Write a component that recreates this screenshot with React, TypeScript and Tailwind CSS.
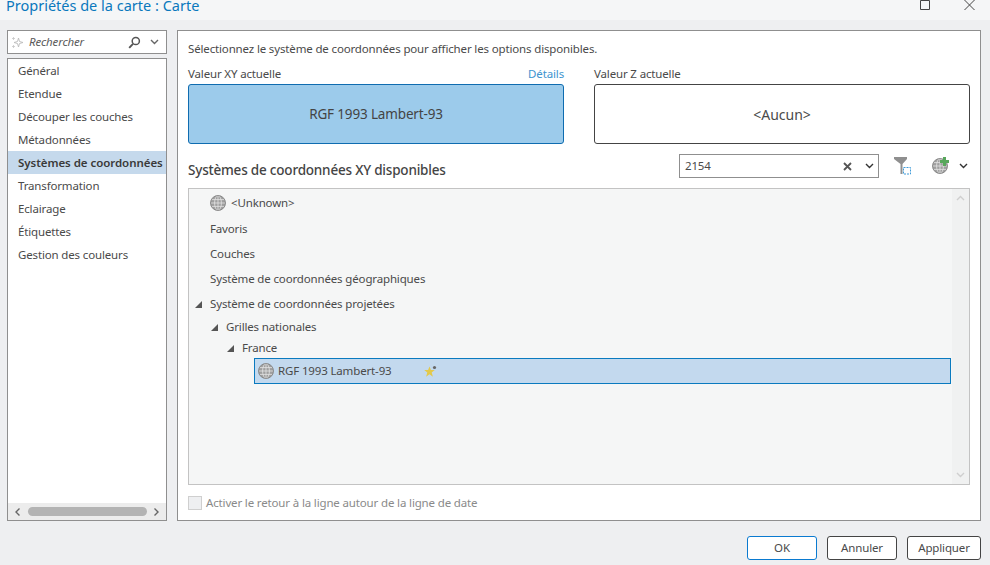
const navItems = [
  'Général',
  'Etendue',
  'Découper les couches',
  'Métadonnées',
  'Systèmes de coordonnées',
  'Transformation',
  'Eclairage',
  'Étiquettes',
  'Gestion des couleurs',
];

function Globe({ size = 16 }: { size?: number }) {
  return (
    <svg width={size} height={size} viewBox="0 0 16 16" className="shrink-0" fill="none">
      <circle cx="8" cy="8" r="7.5" fill="#9f9f9f" />
      <g stroke="#e4e4e4" strokeWidth="0.8">
        <ellipse cx="8" cy="8" rx="3.4" ry="7.4" />
        <path d="M8 .5v15M1.2 4.6h13.6M.5 8h15M1.2 11.4h13.6" />
      </g>
      <circle cx="8" cy="8" r="7.5" stroke="#858585" strokeWidth="0.9" />
    </svg>
  );
}

function Chevron({ className = '' }: { className?: string }) {
  return (
    <svg width="9" height="6" viewBox="0 0 9 6" fill="none" className={className}>
      <path d="M1 1l3.5 3.5L8 1" stroke="currentColor" strokeWidth="1.4" />
    </svg>
  );
}

function Arrow() {
  return (
    <svg width="7" height="7" viewBox="0 0 7 7" className="shrink-0">
      <path d="M7 0v7H0z" fill="#555" />
    </svg>
  );
}

export default function App() {
  return (
    <div className="w-[990px] h-[565px] flex flex-col overflow-hidden bg-[#eeeff1] text-[11.5px] tracking-[-0.15px] text-[#4a4a4a] font-['Noto_Sans',sans-serif]">
      {/* Title bar */}
      <div className="h-5 shrink-0 bg-[#f5f6f7] flex items-start justify-between pl-[6px] overflow-hidden">
        <span className="text-[14.5px] leading-[11px] tracking-normal text-[#0a78bd]">Propriétés de la carte : Carte</span>
        <div className="flex self-start">
          <svg width="10" height="10" viewBox="0 0 10 10" fill="none" className="mr-[34px]">
            <path d="M.5 .5h9v9h-9z" stroke="#444" />
          </svg>
          <svg width="11" height="11" viewBox="0 0 11 11" fill="none" className="mr-[15px]">
            <path d="M.5 0l10 10M10.5 0l-10 10" stroke="#444" />
          </svg>
        </div>
      </div>

      <div className="flex gap-[10px] pl-[7px] pr-[9px] pt-[10px] h-[501px] shrink-0">
        {/* Left column */}
        <div className="w-[160px] shrink-0 flex flex-col gap-1">
          <div className="h-6 shrink-0 border border-[#8f8f8f] bg-white flex items-center pl-[3px] pr-[7px]">
            <svg width="13" height="13" viewBox="0 0 13 13" fill="none" className="shrink-0">
              <path d="M7.5 2l1 3.5L12 6.5 8.5 7.5l-1 3.5-1-3.5L3 6.5l3.5-1z" stroke="#bbb" strokeWidth="0.9" />
              <path d="M2.5 1v3M1 2.5h3M2.5 9v3M1 10.5h3" stroke="#c6c6c6" strokeWidth="0.8" />
            </svg>
            <span className="ml-[5px] italic flex-1 text-[#5a5a5a]">Rechercher</span>
            <svg width="13" height="13" viewBox="0 0 13 13" fill="none" className="mr-[9px]">
              <circle cx="7.8" cy="5" r="3.6" stroke="#555" strokeWidth="1.5" />
              <path d="M5 7.8L1.2 11.8" stroke="#555" strokeWidth="1.9" />
            </svg>
            <Chevron className="text-[#666]" />
          </div>
          <div className="flex-1 border border-[#8f8f8f] bg-white flex flex-col">
            <div className="flex-1">
              {navItems.map((item) =>
                item === 'Systèmes de coordonnées' ? (
                  <div key={item} className="h-[23px] flex items-center pl-[10px] bg-[#c5d9ec] font-semibold tracking-[-0.05px] text-[#3a3a3a] whitespace-nowrap">
                    {item}
                  </div>
                ) : (
                  <div key={item} className="h-[23px] flex items-center pl-[10px] whitespace-nowrap">
                    {item}
                  </div>
                ),
              )}
            </div>
            <div className="h-[17px] bg-[#ececec] flex items-center justify-between px-[5px] text-[#666]">
              <Chevron className="rotate-90" />
              <div className="w-[119px] h-[9px] rounded-full bg-[#b3b3b3]" />
              <Chevron className="-rotate-90" />
            </div>
          </div>
        </div>

        {/* Right panel */}
        <div className="flex-1 border border-[#8f8f8f] bg-white px-[10px] flex flex-col">
          <div className="h-[35px] shrink-0 flex items-center">
            Sélectionnez le système de coordonnées pour afficher les options disponibles.
          </div>

          <div className="flex gap-[30px] h-[78px] shrink-0">
            <div className="w-[376px] flex flex-col">
              <div className="h-[18px] pb-[2px] flex items-center justify-between">
                <span>Valeur XY actuelle</span>
                <span className="text-[#3d94cf]">Détails</span>
              </div>
              <div className="h-[60px] flex items-center justify-center bg-[#9ccbeb] border border-[#0f6cb0] rounded-[3px] text-[13.5px] text-[#444]">
                RGF 1993 Lambert-93
              </div>
            </div>
            <div className="w-[376px] flex flex-col">
              <div className="h-[18px] pb-[2px] flex items-center">Valeur Z actuelle</div>
              <div className="h-[60px] flex items-center justify-center border border-[#444] rounded-[3px] text-[14px] tracking-normal">
                &lt;Aucun&gt;
              </div>
            </div>
          </div>

          <div className="h-[44px] shrink-0 flex items-center pr-[2px]">
            <span className="text-[13.5px] tracking-[-0.2px] font-medium text-[#444] flex-1 mt-[8px]">Systèmes de coordonnées XY disponibles</span>
            <div className="w-[200px] h-6 border border-[#8f8f8f] flex items-center pl-[5px] pr-[4px]">
              <span className="flex-1">2154</span>
              <svg width="9" height="9" viewBox="0 0 9 9" className="mr-[13px]">
                <path d="M1 1l7 7M8 1L1 8" stroke="#555" strokeWidth="1.8" />
              </svg>
              <Chevron className="text-[#333]" />
            </div>
            <svg width="18" height="18" viewBox="0 0 18 18" className="ml-[15px]" fill="none">
              <path d="M0 0h13v2L8.5 7v10h-2V7L0 2z" fill="#8f8f8f" />
              <rect x="9.5" y="10.5" width="7" height="6.5" stroke="#3f9bd9" strokeDasharray="2 1" />
            </svg>
            <div className="relative ml-[20px] w-4 h-4">
              <Globe />
              <svg width="9" height="9" viewBox="0 0 9 9" className="absolute -top-[1px] -right-[1px]">
                <path d="M3 0h3v3h3v3H6v3H3V6H0V3h3z" fill="#57a75b" />
              </svg>
            </div>
            <Chevron className="ml-[11px] text-[#333]" />
          </div>

          {/* Coordinate system tree */}
          <div className="h-[297px] shrink-0 border border-[#c3c3c3] bg-[#f5f6f6] flex">
            <div className="flex-1 flex flex-col pt-px">
              <div className="h-[26px] flex items-center pl-[21px] gap-[5px]">
                <Globe />
                <span>&lt;Unknown&gt;</span>
              </div>
              <div className="h-[26px] flex items-center pl-[21px]">Favoris</div>
              <div className="h-[25px] pb-[1px] flex items-center pl-[21px]">Couches</div>
              <div className="h-[25px] pb-[1px] flex items-center pl-[21px]">Système de coordonnées géographiques</div>
              <div className="h-6 flex items-center pl-[6px] gap-[8px]">
                <Arrow />
                <span>Système de coordonnées projetées</span>
              </div>
              <div className="h-[22px] flex items-center pl-[22px] gap-[8px]">
                <Arrow />
                <span>Grilles nationales</span>
              </div>
              <div className="h-5 flex items-center pl-[38px] gap-[8px]">
                <Arrow />
                <span>France</span>
              </div>
              <div className="ml-[65px] mr-[1px] h-[26px] flex items-center border border-[#0a7abf] bg-[#c3d9ee] pl-[3px]">
                <Globe />
                <span className="ml-[4px] w-[146px]">RGF 1993 Lambert-93</span>
                <svg width="13" height="13" viewBox="0 0 13 13">
                  <path d="M5.5 1.5l1.4 3.6h3.9L7.7 7.5l1.2 4.2-3.4-2.5-3.4 2.5 1.2-4.2L.2 5.1h3.9z" fill="#e3c94a" />
                  <circle cx="10.5" cy="2.5" r="1.6" fill="#666" />
                </svg>
              </div>
            </div>
            <div className="w-[17px] shrink-0 bg-[#f0f1f1] flex flex-col items-center justify-between py-[6px] text-[#cfcfcf]">
              <Chevron className="rotate-180" />
              <Chevron />
            </div>
          </div>

          <div className="flex-1 flex items-center gap-1 text-[#8a8a8a]">
            <div className="w-[14px] h-[14px] border border-[#cfcfcf] bg-[#eeeff1]" />
            <span>Activer le retour à la ligne autour de la ligne de date</span>
          </div>
        </div>
      </div>

      {/* Dialog buttons */}
      <div className="flex justify-end gap-[10px] pr-[9px] pt-[15px]">
        <button className="w-[70px] h-6 border border-[#0a7ad0] rounded-[3px] bg-white">OK</button>
        <button className="w-[70px] h-6 border border-[#444] rounded-[3px] bg-white">Annuler</button>
        <button className="w-[74px] h-6 border border-[#444] rounded-[3px] bg-white">Appliquer</button>
      </div>
    </div>
  );
}
